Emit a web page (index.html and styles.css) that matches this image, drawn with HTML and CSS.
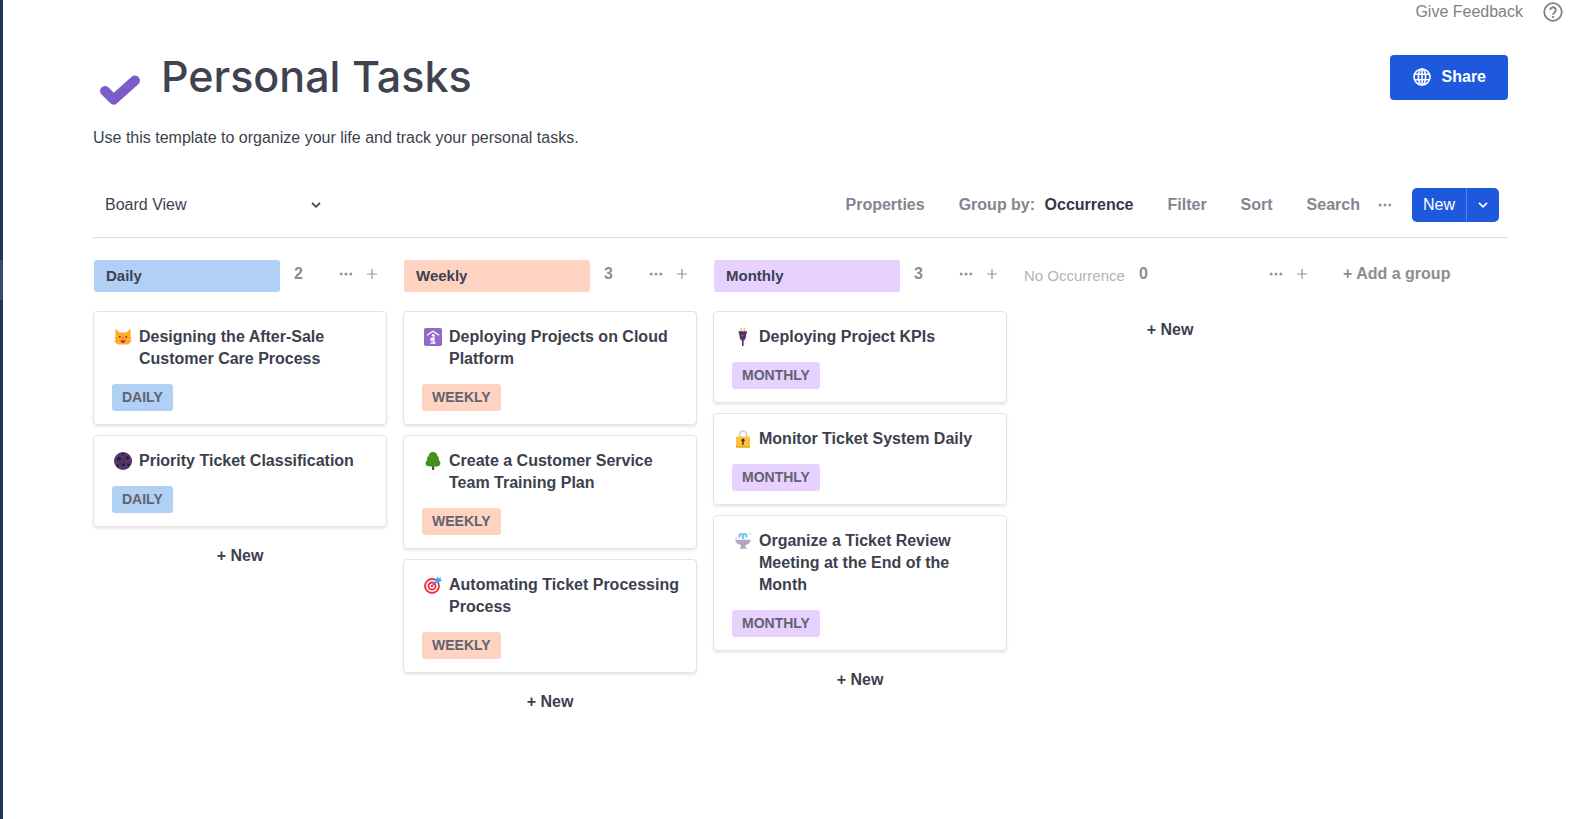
FILE: index.html
```html
<!DOCTYPE html>
<html lang="en">
<head>
<meta charset="utf-8">
<meta name="viewport" content="width=device-width, initial-scale=1">
<title>Personal Tasks</title>
<link rel="stylesheet" href="styles.css">
</head>
<body>
<svg class="defs" aria-hidden="true">
  <symbol id="dots" viewBox="0 0 14 4"><circle cx="2.2" cy="2" r="1.5"/><circle cx="7" cy="2" r="1.5"/><circle cx="11.8" cy="2" r="1.5"/></symbol>
  <symbol id="plus" viewBox="0 0 10 10"><path d="M5 0v10M0 5h10" fill="none" stroke="currentColor" stroke-width="1.2"/></symbol>
  <symbol id="chevron" viewBox="0 0 10 6"><path d="M1 .8l4 4 4-4" fill="none" stroke="currentColor" stroke-width="1.7"/></symbol>
</svg>
<aside class="rail"><div class="rail-active"></div></aside>
<div class="page">
  <div class="topbar">
    <a class="feedback" href="#">Give Feedback</a>
    <button class="help" aria-label="Help">
      <svg width="20" height="20" viewBox="0 0 20 20" fill="none" stroke="currentColor" stroke-width="1.8"><circle cx="10" cy="10" r="8.8"/><path d="M7.2 8.1a2.8 2.8 0 1 1 4.4 2.3c-1 .7-1.6 1.1-1.6 2.3M10 13.9v2"/></svg>
    </button>
  </div>
  <main>
    <header class="head">
      <svg class="check" width="42" height="30" viewBox="0 0 42 30"><path d="M6 16L14.700 24.500L36 5.500" fill="none" stroke="#7b5cc8" stroke-width="10" stroke-linecap="round" stroke-linejoin="round"/></svg>
      <h1>Personal Tasks</h1>
      <button class="share">
        <svg width="18" height="18" viewBox="0 0 18 18" fill="none" stroke="currentColor" stroke-width="1.6"><circle cx="9" cy="9" r="8"/><ellipse cx="9" cy="9" rx="3.6" ry="8"/><path d="M1.6 6.2h14.8M1.6 11.8h14.8M9 1v16"/></svg>
        Share
      </button>
    </header>
    <p class="desc">Use this template to organize your life and track your personal tasks.</p>

    <div class="toolbar">
      <div class="view">
        <select aria-label="View"><option>Board View</option></select>
        <svg width="10" height="6"><use href="#chevron"/></svg>
      </div>
      <div class="tools">
        <button>Properties</button>
        <button>Group by: <span class="value">Occurrence</span></button>
        <button>Filter</button>
        <button>Sort</button>
        <button>Search</button>
      </div>
      <button class="more" aria-label="More"><svg width="14" height="4"><use href="#dots"/></svg></button>
      <div class="split">
        <button class="split-new">New</button>
        <button class="split-menu" aria-label="Templates"><svg width="10" height="6"><use href="#chevron"/></svg></button>
      </div>
    </div>

    <div class="board">
      <section class="column">
        <div class="column-head">
          <h2 class="pill blue">Daily</h2><span class="count">2</span>
          <button class="more" aria-label="Group options"><svg width="14" height="4"><use href="#dots"/></svg></button>
          <button class="plus" aria-label="Add card"><svg width="10" height="10"><use href="#plus"/></svg></button>
        </div>
        <article class="card">
          <div class="card-title">
            <svg class="emoji" viewBox="0 0 18 18"><path fill="#ffab24" d="M2 1.200Q1.400.6 1.400 2L1.600 13.500Q2 16.500 5 16.500h8q3 0 3.400-3L16.600 2q0-1.400-.8-.8L12.500 4.400h-7z"/><path stroke="#f28a1e" stroke-width=".8" d="M.2 9.800l3 .7M.2 13.500l3-.8M17.800 9.800l-3 .7M17.800 13.500l-3-.8"/><circle cx="5.800" cy="8.800" r=".9" fill="#723"/><circle cx="12.200" cy="8.800" r=".9" fill="#723"/><path fill="#b8276c" d="M8 9.800h2L9 11zM6.500 12q2.500.8 5 0-.3 3-2.500 3t-2.500-3"/></svg>
            <h3>Designing the After-Sale Customer Care Process</h3>
          </div>
          <span class="tag blue">DAILY</span>
        </article>
        <article class="card">
          <div class="card-title">
            <svg class="emoji" viewBox="0 0 18 18"><circle cx="9" cy="9" r="9" fill="#533566"/><g fill="#321b41"><circle cx="5" cy="6.8" r="2.1"/><circle cx="13.3" cy="6" r="1.8"/><circle cx="9.5" cy="12.6" r="1.6"/><circle cx="9" cy="2.2" r="1.2"/><circle cx="3.7" cy="13.6" r="1.3"/><circle cx="14.8" cy="12.8" r="1.4"/><circle cx="9.6" cy="8.4" r=".7"/></g></svg>
            <h3>Priority Ticket Classification</h3>
          </div>
          <span class="tag blue">DAILY</span>
        </article>
        <button class="add">+ New</button>
      </section>

      <section class="column">
        <div class="column-head">
          <h2 class="pill orange">Weekly</h2><span class="count">3</span>
          <button class="more" aria-label="Group options"><svg width="14" height="4"><use href="#dots"/></svg></button>
          <button class="plus" aria-label="Add card"><svg width="10" height="10"><use href="#plus"/></svg></button>
        </div>
        <article class="card">
          <div class="card-title">
            <svg class="emoji" viewBox="0 0 18 18"><rect width="18" height="18" rx="1.8" fill="#9269c8"/><path d="M3 7.200L9 3.300l6 3.900" fill="none" stroke="#fff" stroke-width="1.300"/><circle cx="9.200" cy="7.300" r="1.400" fill="#fff"/><path d="M9.800 8.500v3M9.800 10.200l-3.300.3M6.500 12l3.300.2v2.600M6.500 15h5" fill="none" stroke="#fff" stroke-width="1.400"/></svg>
            <h3>Deploying Projects on Cloud Platform</h3>
          </div>
          <span class="tag orange">WEEKLY</span>
        </article>
        <article class="card">
          <div class="card-title">
            <svg class="emoji" viewBox="0 0 18 18"><path fill="#6d4534" d="M8 13h2.200v5H8z"/><path fill="#43901b" d="M9 0c2.600 0 4.400 2 4.300 4.100 1.600.9 2 2.600 1.400 4 1.600 1.100 2.300 3.400 1.200 5-1 1.600-3 1.600-6.900 1.600s-5.900 0-6.900-1.600c-1.100-1.600-.4-3.900 1.200-5-.6-1.400-.2-3.100 1.400-4C4.600 2 6.400 0 9 0"/></svg>
            <h3>Create a Customer Service Team Training Plan</h3>
          </div>
          <span class="tag orange">WEEKLY</span>
        </article>
        <article class="card">
          <div class="card-title">
            <svg class="emoji" viewBox="0 0 18 18"><g fill="none" stroke="#f5313b" stroke-width="1.900"><circle cx="8" cy="10" r="7"/><circle cx="8" cy="10" r="3.500"/></g><circle cx="8" cy="10" r="1.200" fill="#f5313b"/><path d="M8.300 9.700L14 4" stroke="#3986c9" stroke-width="1.300"/><path fill="#45a9f5" d="M11 4.200L14 .3l.6 2.500L16.800.7l-.2 2.700 1.400.5L14.500 7l-3-.4z"/></svg>
            <h3>Automating Ticket Processing Process</h3>
          </div>
          <span class="tag orange">WEEKLY</span>
        </article>
        <button class="add">+ New</button>
      </section>

      <section class="column">
        <div class="column-head">
          <h2 class="pill purple">Monthly</h2><span class="count">3</span>
          <button class="more" aria-label="Group options"><svg width="14" height="4"><use href="#dots"/></svg></button>
          <button class="plus" aria-label="Add card"><svg width="10" height="10"><use href="#plus"/></svg></button>
        </div>
        <article class="card">
          <div class="card-title">
            <svg class="emoji" viewBox="0 0 18 18"><path fill="#f3bf80" d="M6.300 0h1.600v4H6.300zM9.600 0h1.600v4H9.600z"/><path fill="#533566" d="M4.600 3.300h8.300v2.200h-.5l-.8 5-1.400 1.900H7.300L5.900 10.500l-.8-5h-.5zM8 12h1.600v6H8z"/><path fill="#7d5a94" d="M7.300 7h3v1h-3z"/></svg>
            <h3>Deploying Project KPIs</h3>
          </div>
          <span class="tag purple">MONTHLY</span>
        </article>
        <article class="card">
          <div class="card-title">
            <svg class="emoji" viewBox="0 0 18 18"><path d="M5.500 7V4.600a3.500 3.500 0 0 1 7 0V7" fill="none" stroke="#d0d0d0" stroke-width="1.700"/><rect x="2" y="6.500" width="14" height="11.500" rx="1.200" fill="#fbc23a"/><path d="M2 16.700h14" stroke="#eba52c"/><circle cx="9" cy="10.200" r="1.600" fill="#433"/><path fill="#433" d="M8.300 10.500h1.400V15H8.300z"/></svg>
            <h3>Monitor Ticket System Daily</h3>
          </div>
          <span class="tag purple">MONTHLY</span>
        </article>
        <article class="card">
          <div class="card-title">
            <svg class="emoji" viewBox="0 0 18 18"><path d="M5.500 5.500V3.500q0-1.500 1.800-1.500T9 3.500V7M9 3.500Q9 2 10.700 2t1.800 1.500v2" fill="none" stroke="#74c6fa" stroke-width="2.200"/><circle cx="2" cy="6" r=".8" fill="#74c6fa"/><circle cx="15.700" cy="1.800" r=".8" fill="#74c6fa"/><path fill="#b4a4bf" d="M1.300 7.800h15.400q-.3 4.200-5.200 5.200v2.300l1.200.6v.9H5.700v-.9l1.200-.6V13Q1.700 12 1.300 7.800"/></svg>
            <h3>Organize a Ticket Review Meeting at the End of the Month</h3>
          </div>
          <span class="tag purple">MONTHLY</span>
        </article>
        <button class="add">+ New</button>
      </section>

      <section class="column">
        <div class="column-head">
          <h2 class="none">No Occurrence</h2><span class="count">0</span>
          <button class="more" aria-label="Group options"><svg width="14" height="4"><use href="#dots"/></svg></button>
          <button class="plus" aria-label="Add card"><svg width="10" height="10"><use href="#plus"/></svg></button>
        </div>
        <button class="add">+ New</button>
      </section>

      <button class="add-group">+ Add a group</button>
    </div>
  </main>
</div>
</body>
</html>
```
FILE: styles.css
```css
* { box-sizing: border-box; }
body {
  margin: 0;
  min-height: 100vh;
  display: flex;
  background: #fff;
  color: #3d3f4f;
  font: 16px/22px "Liberation Sans", Arial, sans-serif;
}
h1, h2, h3, p { margin: 0; }
button, select {
  margin: 0;
  padding: 0;
  border: 0;
  background: none;
  color: inherit;
  font: inherit;
  cursor: pointer;
}
button svg { display: block; }
.defs { position: absolute; width: 0; height: 0; }

.rail { flex: none; width: 3px; padding-top: 260px; background: #1e325c; }
.rail-active { height: 40px; background: #3a496e; }
.page { flex: 1; min-width: 0; }

.topbar {
  display: flex;
  justify-content: flex-end;
  align-items: center;
  gap: 20px;
  height: 24px;
  padding-right: 24px;
  color: #7f8187;
}
.feedback { color: inherit; text-decoration: none; }

main { padding: 31px 79px 32px 90px; }
.head { display: flex; align-items: flex-start; height: 71px; }
.check { flex: none; margin: 20px 20px 0 6px; }
h1 { flex: 1; font: 500 43px/42px Inter, sans-serif; color: #3f4350; }
.share {
  display: flex;
  align-items: center;
  gap: 11px;
  height: 45px;
  padding: 0 22px 2px 23px;
  border-radius: 4px;
  background: #1e58dd;
  color: #fff;
  font-weight: bold;
}
.desc { line-height: 24px; }

.toolbar {
  display: flex;
  align-items: center;
  height: 66px;
  margin-top: 22px;
  padding-right: 9px;
  border-bottom: 1px solid #dcdedf;
}
.view { position: relative; display: flex; align-items: center; width: 235px; }
.view select { width: 100%; height: 32px; padding-left: 12px; appearance: none; }
.view svg { position: absolute; right: 7px; pointer-events: none; }
.tools {
  display: flex;
  gap: 34px;
  margin-left: auto;
  color: #83858f;
  font-weight: bold;
}
.tools button { font-weight: bold; }
.value { margin-left: 5px; color: #363849; }
.more { color: #94959b; fill: currentColor; }
.toolbar .more { margin: 0 20px 0 18px; }
.split {
  display: flex;
  height: 34px;
  border-radius: 5px;
  overflow: hidden;
  background: #1e58dd;
  color: #fff;
}
.split-new { padding: 0 11px; }
.split-menu { padding: 0 11px; border-left: 1px solid #5583e6; }

.board { display: flex; gap: 16px; padding-top: 22px; }
.column { flex: 0 0 294px; display: flex; flex-direction: column; gap: 10px; }
.column-head { display: flex; align-items: center; height: 32px; margin: 0 10px 9px 1px; }
.pill {
  width: 186px;
  padding-left: 12px;
  border-radius: 3px;
  font-size: 15px;
  line-height: 32px;
}
.none { color: #b3b4b9; font-size: 15px; font-weight: normal; line-height: 32px; }
.count { margin: 0 auto 4px 14px; color: #8d8d8f; font-weight: bold; }
.column-head .more, .plus { margin-bottom: 5px; }
.plus { margin-left: 14px; color: #94959b; }
.blue { background: #b1d0f6; }
.orange { background: #fed3c2; }
.purple { background: #e6d1ff; }

.card {
  padding: 14px 12px 13px 18px;
  border: 1px solid #e3e4e6;
  border-radius: 4px;
  background: #fff;
  box-shadow: 0 2px 3px rgba(0, 0, 0, 0.08);
}
.card-title { display: flex; gap: 7px; padding-left: 2px; margin-bottom: 14px; }
.emoji { flex: none; width: 18px; height: 18px; margin-top: 2px; }
h3 { font-size: 16px; line-height: 22px; }
.tag {
  display: inline-block;
  padding: 0 10px;
  border-radius: 3px;
  color: #62636f;
  font-size: 14px;
  font-weight: bold;
  line-height: 27px;
  vertical-align: top;
}
.add { align-self: center; margin-top: 8px; font-weight: bold; }
.add-group { align-self: flex-start; margin: 3px 0 0 10px; color: #8d8d8f; font-weight: bold; white-space: nowrap; }
```
